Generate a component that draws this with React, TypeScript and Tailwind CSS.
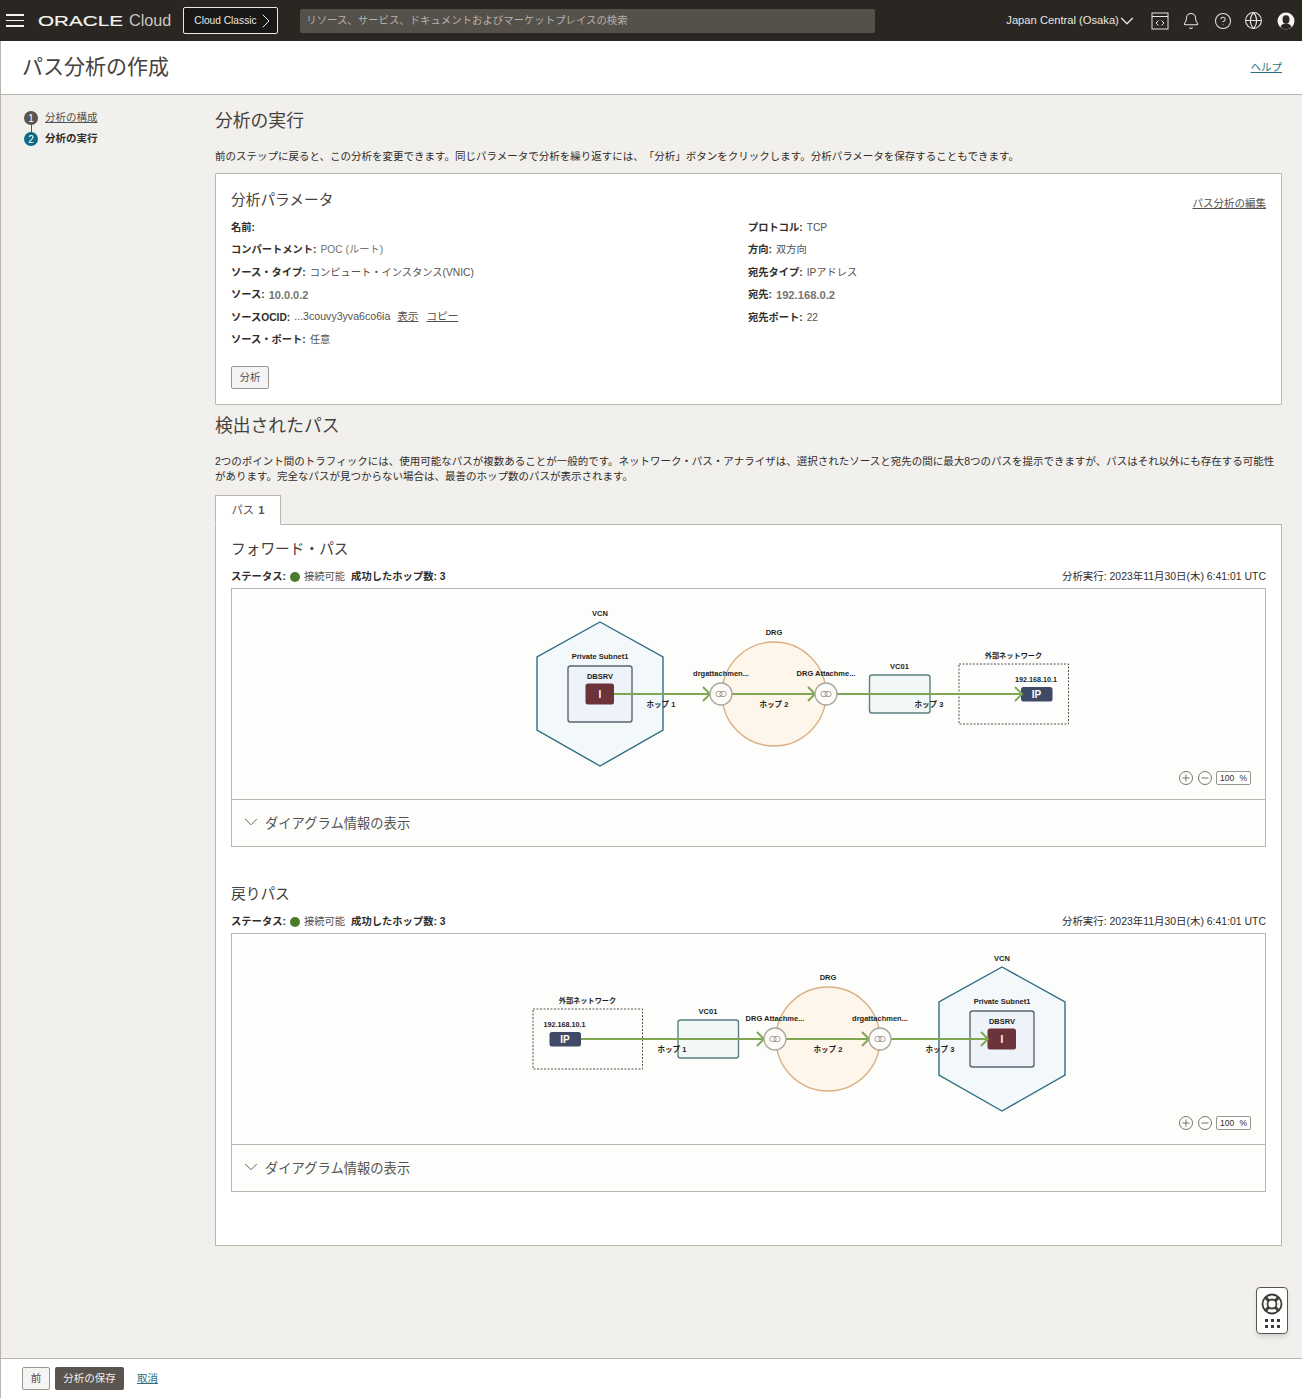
import { FC, ReactNode } from "react";
import { Bell, ChevronDown, ChevronRight, CircleHelp, Globe } from "lucide-react";

const font = "[font-family:'Liberation_Sans','Noto_Sans_CJK_JP',sans-serif]";

const leftParams: [string, ReactNode][] = [
  ["名前:", ""],
  ["コンパートメント:", <span className="text-[#77736e]">POC (ルート)</span>],
  ["ソース・タイプ:", "コンピュート・インスタンス(VNIC)"],
  ["ソース:", <span className="text-[#77736e] font-bold text-[11px]">10.0.0.2</span>],
  [
    "ソースOCID:",
    <span className="flex gap-[7px] text-[10.6px]">
      <span>...3couvy3yva6co6ia</span>
      <a className="underline">表示</a>
      <a className="underline ml-px">コピー</a>
    </span>,
  ],
  ["ソース・ポート:", "任意"],
];

const rightParams: [string, ReactNode][] = [
  ["プロトコル:", "TCP"],
  ["方向:", "双方向"],
  ["宛先タイプ:", "IPアドレス"],
  ["宛先:", <span className="text-[#77736e] font-bold text-[11.2px]">192.168.0.2</span>],
  ["宛先ポート:", "22"],
];

const Param: FC<{ label: string; value: ReactNode }> = ({ label, value }) => (
  <div className="flex items-center gap-[4px] h-[22.4px] text-[10.25px] whitespace-nowrap">
    <span className="font-bold text-[#312d2a]">{label}</span>
    <span className="text-[#56524e]">{value}</span>
  </div>
);

const Label: FC<{ x: number; y: number; children: ReactNode; size?: number; fill?: string }> = ({
  x,
  y,
  children,
  size = 7.5,
  fill = "#1f1d1b",
}) => (
  <text x={x} y={y} textAnchor="middle" fontSize={size} fontWeight="700" fill={fill}>
    {children}
  </text>
);

const Arrow: FC<{ x1: number; x2: number; y: number }> = ({ x1, x2, y }) => (
  <g stroke="#7fa650" strokeWidth="1.9" fill="none">
    <path d={`M${x1} ${y}H${x2}`} />
    <path d={`M${x2 - 7} ${y - 7}L${x2} ${y}L${x2 - 7} ${y + 7}`} />
  </g>
);

const Attachment: FC<{ x: number; y: number }> = ({ x, y }) => (
  <g>
    <circle cx={x} cy={y} r="11" fill="#fdfcf9" stroke="#aaa79c" strokeWidth="1.3" />
    <rect x={x - 5} y={y - 2.5} width="6" height="5" rx="2" fill="none" stroke="#8f8c84" strokeWidth="0.8" />
    <rect x={x - 1} y={y - 2.5} width="6" height="5" rx="2" fill="none" stroke="#8f8c84" strokeWidth="0.8" />
  </g>
);

const Vcn: FC<{ x: number; y: number }> = ({ x, y }) => (
  <g>
    <path
      d={`M${x} ${y - 72}L${x + 63} ${y - 37}V${y + 36}L${x} ${y + 72}L${x - 63} ${y + 36}V${y - 37}Z`}
      fill="#f3f8fb"
      stroke="#2f6f82"
      strokeWidth="1.4"
    />
    <Label x={x} y={y - 78}>VCN</Label>
    <Label x={x} y={y - 35}>Private Subnet1</Label>
    <rect x={x - 32} y={y - 28} width="64" height="56" rx="2.5" fill="#eef3fa" stroke="#5f6670" strokeWidth="1.4" />
    <Label x={x} y={y - 15}>DBSRV</Label>
    <rect x={x - 14.5} y={y - 10.5} width="28.5" height="21" rx="2.5" fill="#6b333a" />
    <Label x={x} y={y + 3.5} size={10} fill="#ffffff">I</Label>
  </g>
);

const Drg: FC<{ x: number; y: number }> = ({ x, y }) => (
  <g>
    <circle cx={x} cy={y} r="52" fill="#fef6ea" stroke="#d9b083" strokeWidth="1.4" />
    <Label x={x} y={y - 59}>DRG</Label>
  </g>
);

const Vc: FC<{ x: number; y: number }> = ({ x, y }) => (
  <g>
    <rect x={x} y={y} width="60.5" height="38" rx="2.5" fill="#f2f8f7" stroke="#5c8082" strokeWidth="1.4" />
    <Label x={x + 30} y={y - 6}>VC01</Label>
  </g>
);

const External: FC<{ x: number; y: number; ipX: number }> = ({ x, y, ipX }) => (
  <g>
    <rect x={x} y={y} width="109.5" height="60" fill="none" stroke="#55524e" strokeWidth="1" strokeDasharray="2 1.5" />
    <Label x={x + 54.5} y={y - 6} size={7.2}>外部ネットワーク</Label>
    <Label x={ipX + 15} y={y + 18} size={7.2}>192.168.10.1</Label>
    <rect x={ipX} y={y + 23} width="31.5" height="14.5" rx="2.5" fill="#3f4a66" />
    <Label x={ipX + 15.5} y={y + 34} size={10} fill="#ffffff">IP</Label>
  </g>
);

const ForwardDiagram: FC = () => (
  <svg viewBox="232 589 1033 210" className="block w-full h-[210px]">
    <Vcn x={600} y={694} />
    <Drg x={774} y={694} />
    <Vc x={869.5} y={675} />
    <External x={959} y={664} ipX={1021} />
    <Arrow x1={614} x2={710} y={694} />
    <Arrow x1={732} x2={815} y={694} />
    <Arrow x1={837} x2={1022} y={694} />
    <Attachment x={721} y={694} />
    <Attachment x={826} y={694} />
    <Label x={721} y={676}>drgattachmen...</Label>
    <Label x={826} y={676}>DRG Attachme...</Label>
    <Label x={661} y={707}>ホップ 1</Label>
    <Label x={774} y={707}>ホップ 2</Label>
    <Label x={929} y={707}>ホップ 3</Label>
  </svg>
);

const ReturnDiagram: FC = () => (
  <svg viewBox="232 934 1033 210" className="block w-full h-[210px]">
    <External x={533} y={1009} ipX={549.5} />
    <Vc x={678} y={1020} />
    <Drg x={828} y={1039} />
    <Vcn x={1002} y={1039} />
    <Arrow x1={581} x2={764} y={1039} />
    <Arrow x1={786} x2={869} y={1039} />
    <Arrow x1={891} x2={988} y={1039} />
    <Attachment x={775} y={1039} />
    <Attachment x={880} y={1039} />
    <Label x={775} y={1021}>DRG Attachme...</Label>
    <Label x={880} y={1021}>drgattachmen...</Label>
    <Label x={672} y={1052}>ホップ 1</Label>
    <Label x={828} y={1052}>ホップ 2</Label>
    <Label x={940} y={1052}>ホップ 3</Label>
  </svg>
);

const ZoomControls: FC = () => (
  <div className="absolute right-[14px] bottom-[13px] flex items-center gap-[3px]">
    <svg viewBox="0 0 16 16" className="w-4 h-4 text-[#77736e]" fill="none" stroke="currentColor" strokeWidth="1">
      <circle cx="8" cy="8" r="6.5" />
      <path d="M4.5 8h7M8 4.5v7" />
    </svg>
    <svg viewBox="0 0 16 16" className="w-4 h-4 text-[#77736e]" fill="none" stroke="currentColor" strokeWidth="1">
      <circle cx="8" cy="8" r="6.5" />
      <path d="M4.5 8h7" />
    </svg>
    <div className="w-[35px] h-[14px] flex items-center justify-between px-[3px] border border-[#9b9790] rounded-[2px] text-[8.5px] text-[#312d2a] bg-white">
      <span>100</span>
      <span>%</span>
    </div>
  </div>
);

const PathSection: FC<{ title: string; children: ReactNode }> = ({ title, children }) => (
  <section>
    <h3 className="text-[14.7px] leading-5 text-[#45413d]">{title}</h3>
    <div className="flex justify-between items-center mt-[8px] h-[20px] text-[#312d2a]">
      <div className="flex items-center text-[10.3px]">
        <span className="font-bold">ステータス:</span>
        <span className="w-[10px] h-[10px] rounded-full bg-[#4a7c2c] mx-[4px]" />
        <span className="text-[#56524e]">接続可能</span>
        <span className="font-bold ml-[6px]">成功したホップ数: 3</span>
      </div>
      <span className="text-[10.45px]">分析実行: 2023年11月30日(木) 6:41:01 UTC</span>
    </div>
    <div className="mt-[1px] border border-[#b9b6ae] bg-[#fdfdfc]">
      <div className="relative">
        {children}
        <ZoomControls />
      </div>
      <div className="flex items-center h-[47px] border-t border-[#b9b6ae] pl-[8px] text-[13.3px] text-[#56524e]">
        <ChevronDown className="w-[22px] h-[22px] mr-[3px] -mt-[2px] shrink-0" strokeWidth={1} />
        <span className="pt-[2px]">ダイアグラム情報の表示</span>
      </div>
    </div>
  </section>
);

export default function App() {
  return (
    <div className={`${font} relative flex flex-col h-[1398px] w-[1302px] overflow-hidden bg-[#f1f0ed] text-[#312d2a] [text-spacing-trim:space-all]`}>
      <header className="flex items-center h-[41px] shrink-0 bg-[#2a2622] text-[#e9e7e3]">
        <div className="flex flex-col gap-[4px] w-[18px] ml-[6px]">
          <span className="h-[1.5px] bg-[#f5f4f2]" />
          <span className="h-[1.5px] bg-[#f5f4f2]" />
          <span className="h-[1.5px] bg-[#f5f4f2]" />
        </div>
        <svg viewBox="0 0 86 14" className="w-[86px] h-[14px] ml-[14px] mr-[5px]">
          <text x="0" y="12" textLength="85" lengthAdjust="spacingAndGlyphs" fontSize="14" fill="#f5f4f2" stroke="#f5f4f2" strokeWidth="0.15">
            ORACLE
          </text>
        </svg>
        <span className="text-[16.2px] text-[#c9c6c1]">Cloud</span>
        <div className="flex items-center h-[27px] w-[95px] ml-[12px] pl-[10px] border border-[#e9e7e3] rounded-[2px] bg-[#1a1816] text-[10.2px] whitespace-nowrap">
          Cloud Classic
          <ChevronRight className="w-[24px] h-[24px] -ml-[3px] shrink-0" strokeWidth={1} />
        </div>
        <div className="flex items-center h-[24px] w-[575px] ml-[22px] pl-[6px] rounded-[2px] bg-[#55504a] text-[10.4px] text-[#b4b0aa]">
          リソース、サービス、ドキュメントおよびマーケットプレイスの検索
        </div>
        <div className="flex items-center ml-[131px] text-[11.2px] whitespace-nowrap">
          Japan Central (Osaka)
          <ChevronDown className="w-[22px] h-[22px] -ml-[2.5px] shrink-0" strokeWidth={1.4} />
        </div>
        <svg viewBox="0 0 18 18" className="w-[18px] h-[18px] ml-[12.5px]" fill="none" stroke="#e9e7e3" strokeWidth="1">
          <rect x="1" y="1" width="16" height="16" />
          <path d="M1 4.5h16M7.5 8.5L5 11l2.5 2.500M10.500 8.500L13 11l-2.500 2.500" />
        </svg>
        <Bell className="w-[18px] h-[18px] ml-[13px]" strokeWidth={1.35} />
        <CircleHelp className="w-[18px] h-[18px] ml-[14px]" strokeWidth={1.35} />
        <Globe className="w-[19px] h-[19px] ml-[12.5px]" strokeWidth={1.3} />
        <svg viewBox="0 0 18 18" className="w-[18px] h-[18px] ml-[13.5px]">
          <circle cx="9" cy="9" r="8.5" fill="#f5f4f2" />
          <ellipse cx="9" cy="7.5" rx="3.5" ry="4.2" fill="#2a2622" />
          <path d="M3.500 15c1-3 3-3.600 5.500-3.600s4.500.600 5.500 3.600a8 8 0 0 1-11 0z" fill="#2a2622" />
        </svg>
      </header>

      <div className="flex items-center justify-between h-[54px] shrink-0 pl-[21px] pr-[20px] bg-white border-b border-l border-[#b9b6ae]">
        <h1 className="text-[21px] font-normal text-[#45413d] -mt-[2px]">パス分析の作成</h1>
        <a className="text-[10.5px] underline text-[#2c6e82]">ヘルプ</a>
      </div>

      <div className="flex flex-1 min-h-0 border-l border-[#b9b6ae]">
        <nav className="relative w-[214px] shrink-0 pl-[23px] pt-[13px] text-[10.5px]">
          <span className="absolute left-[29.500px] top-[28px] w-px h-[10px] bg-[#5a5450]" />
          <div className="flex items-center gap-[7px] h-[20px]">
            <span className="flex items-center justify-center w-[14px] h-[14px] rounded-full bg-[#5a5450] text-white text-[10px]">1</span>
            <a className="underline text-[#56524e]">分析の構成</a>
          </div>
          <div className="flex items-center gap-[7px] h-[20px] mt-px">
            <span className="flex items-center justify-center w-[14px] h-[14px] rounded-full bg-[#0f6a86] text-white text-[10px]">2</span>
            <span className="font-bold">分析の実行</span>
          </div>
        </nav>

        <main className="w-[1067px] pt-[14px]">
          <h2 className="text-[17.8px] leading-6 text-[#45413d]">分析の実行</h2>
          <p className="mt-[15px] text-[10.5px] leading-4 text-[#312d2a]">
            前のステップに戻ると、この分析を変更できます。同じパラメータで分析を繰り返すには、「分析」ボタンをクリックします。分析パラメータを保存することもできます。
          </p>

          <div className="relative mt-[9px] h-[232px] px-[15px] pt-[16px] bg-white border border-[#b9b6ae] rounded-[1px]">
            <div className="flex justify-between items-end">
              <h3 className="text-[14.7px] leading-5 text-[#45413d]">分析パラメータ</h3>
              <a className="-mb-[2px] text-[10.5px] underline text-[#56524e]">パス分析の編集</a>
            </div>
            <div className="flex mt-[6.6px]">
              <div className="w-[517px]">
                {leftParams.map(([label, value]) => (
                  <Param key={label} label={label} value={value} />
                ))}
              </div>
              <div>
                {rightParams.map(([label, value]) => (
                  <Param key={label} label={label} value={value} />
                ))}
              </div>
            </div>
            <button className="mt-[15.4px] w-[38px] h-[23px] text-[10.5px] text-[#56524e] bg-[#f5f4f2] border border-[#9b9790] rounded-[2px]">
              分析
            </button>
          </div>

          <h2 className="mt-[9px] text-[17.8px] leading-6 text-[#45413d]">検出されたパス</h2>
          <p className="mt-[16px] pr-[4px] text-[10.5px] leading-[15px] text-[#312d2a]">
            2つのポイント間のトラフィックには、使用可能なパスが複数あることが一般的です。ネットワーク・パス・アナライザは、選択されたソースと宛先の間に最大8つのパスを提示できますが、パスはそれ以外にも存在する可能性があります。完全なパスが見つからない場合は、最善のホップ数のパスが表示されます。
          </p>

          <div className="relative z-10 flex items-center justify-center mt-[11px] w-[66px] h-[30px] -mb-px bg-white border border-[#b9b6ae] border-b-white text-[11.3px] text-[#56524e]">
            パス <span className="font-bold ml-1">1</span>
          </div>
          <div className="h-[722px] px-[15px] pt-[14px] bg-white border border-[#b9b6ae] flex flex-col gap-[37px]">
            <PathSection title="フォワード・パス">
              <ForwardDiagram />
            </PathSection>
            <PathSection title="戻りパス">
              <ReturnDiagram />
            </PathSection>
          </div>
        </main>
      </div>

      <footer className="flex items-center h-[40px] shrink-0 pl-[21px] bg-white border-t border-l border-[#b9b6ae] text-[10.5px]">
        <button className="w-[28px] h-[23px] text-[#56524e] bg-[#f5f4f2] border border-[#9b9790] rounded-[2px]">前</button>
        <button className="w-[69px] h-[23px] ml-[5px] text-[#f1f0ed] bg-[#5a5450] rounded-[2px]">分析の保存</button>
        <a className="ml-[13px] underline text-[#2c6e82]">取消</a>
      </footer>

      <div className="absolute left-[1256px] top-[1287px] flex flex-col items-center gap-[4px] w-[32px] h-[47px] pt-[5px] bg-white border border-[#5a5450] rounded-[4px] shadow-md">
        <svg viewBox="0 0 22 22" className="w-[22px] h-[22px]" fill="none" stroke="#3f3b37">
          <circle cx="11" cy="11" r="9.500" strokeWidth="1.800" />
          <circle cx="11" cy="11" r="4.500" strokeWidth="1.800" />
          <path d="M4.300 4.300l3.500 3.500M17.700 4.300l-3.500 3.500M4.300 17.700l3.500-3.500M17.700 17.700l-3.500-3.500" strokeWidth="3" />
        </svg>
        <div className="grid grid-cols-3 gap-x-[3px] gap-y-[3px]">
          {[1, 2, 3, 4, 5, 6].map((dot) => (
            <span key={dot} className="w-[3px] h-[3px] bg-[#3f3b37]" />
          ))}
        </div>
      </div>
    </div>
  );
}
